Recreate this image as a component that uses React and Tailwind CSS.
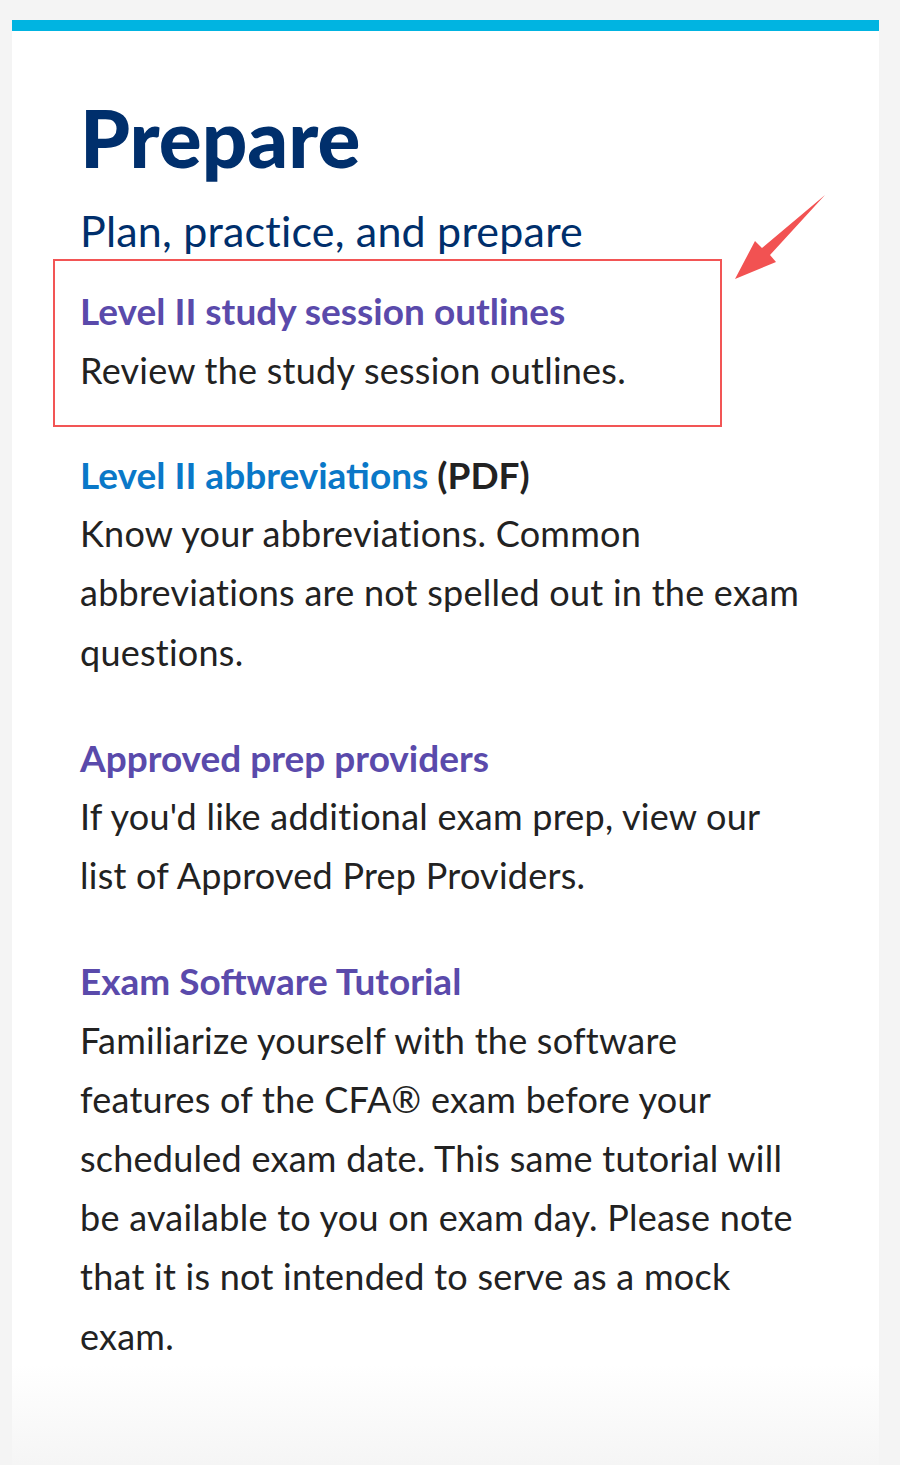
import React from "react";

const sections = [
  {
    title: "Level II abbreviations",
    suffix: " (PDF)",
    color: "text-[#0a78c8]",
    body: "Know your abbreviations. Common abbreviations are not spelled out in the exam questions.",
  },
  {
    title: "Approved prep providers",
    color: "text-[#5a4aab]",
    body: "If you'd like additional exam prep, view our list of Approved Prep Providers.",
  },
  {
    title: "Exam Software Tutorial",
    color: "text-[#5a4aab]",
    body: "Familiarize yourself with the software features of the CFA® exam before your scheduled exam date. This same tutorial will be available to you on exam day. Please note that it is not intended to serve as a mock exam.",
  },
];

// red annotation arrow pointing at the boxed item
function Arrow() {
  return (
    <svg className="absolute left-[711px] top-[144px]" width="120" height="140" viewBox="723 175 120 140">
      <polygon
        points="825,195 770,255 776,262 735,279 755,241 762,248"
        fill="#f25252"
      />
    </svg>
  );
}

export default function App() {
  return (
    <div className="min-h-screen bg-[#f4f4f4] pt-[20px] pl-[12px] pr-[21px] font-['Lato',sans-serif]">
      <div className="relative h-[1445px] border-t-[11px] border-[#00b4e1] bg-gradient-to-b from-white from-[93%] to-[#f5f5f5]">
        <Arrow />
        <div className="pl-[68px] pr-[69px] pt-[58px]">
          <h1 className="text-[80px] leading-[96px] font-black text-[#002f6c]">Prepare</h1>
          <h2 className="mt-[19px] text-[43px] leading-[54px] tracking-[0.2px] text-[#002f6c]">Plan, practice, and prepare</h2>

          <div className="ml-[-27px] mt-[1px] w-[669px] border-2 border-[#f25555] pl-[25px] pt-[20px] pb-[25px]">
            <a className="block text-[37px] leading-[59.5px] font-bold text-[#5a4aab]">Level II study session outlines</a>
            <p className="text-[36px] leading-[59.5px] tracking-[0.25px] text-[#222]">Review the study session outlines.</p>
          </div>

          {sections.map((s, i) => (
            <div key={i} className={i === 0 ? "mt-[18px]" : "mt-[46px]"}>
              <p className="text-[37px] leading-[59.2px] font-bold">
                <a className={s.color}>{s.title}</a>
                {s.suffix && <span className="text-[#222]">{s.suffix}</span>}
              </p>
              <p className="text-[36px] leading-[59.2px] tracking-[0.25px] text-[#222]">{s.body}</p>
            </div>
          ))}
        </div>
      </div>
    </div>
  );
}
